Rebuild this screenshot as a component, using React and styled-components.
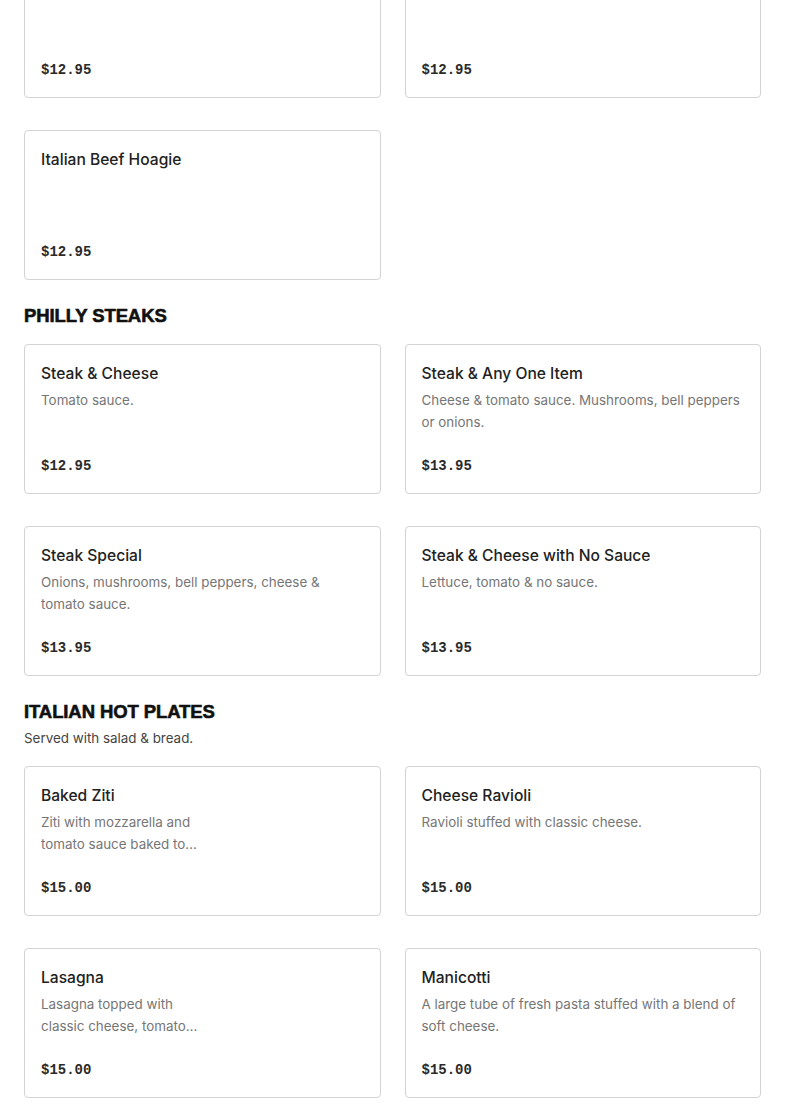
import React from 'react';
import styled, { createGlobalStyle } from 'styled-components';

const GlobalStyle = createGlobalStyle`
  * {
    box-sizing: border-box;
  }
  body {
    margin: 0;
    background: #ffffff;
    font-family: Inter, 'Liberation Sans', sans-serif;
    overflow: hidden;
  }
`;

const Page = styled.div`
  padding: 0 24px;
  margin-top: -52px;
`;

const Section = styled.section`
  padding-top: ${(p) => (p.first ? '0' : '24px')};
`;

const Heading = styled.h2`
  margin: 0;
  font-family: 'Liberation Sans', Arial, sans-serif;
  font-size: 18.5px;
  font-weight: 900;
  line-height: 24px;
  color: #111111;
  letter-spacing: -0.1px;
  -webkit-text-stroke: 0.6px #111111;
`;

const Subtitle = styled.p`
  margin: 3px 0 0;
  padding-bottom: 1px;
  font-size: 13.4px;
  line-height: 22px;
  color: #444444;
`;

const Grid = styled.div`
  display: grid;
  grid-template-columns: 1fr 1fr;
  column-gap: 24px;
  row-gap: 32px;
  margin-top: ${(p) => (p.flush ? '0' : '16px')};
`;

const Card = styled.div`
  display: flex;
  flex-direction: column;
  height: 150px;
  padding: 17px 16px 15px;
  border: 1px solid #d3d3d3;
  border-radius: 4px;
  background: #ffffff;
`;

const Title = styled.div`
  font-size: 15.6px;
  font-weight: 500;
  line-height: 24px;
  color: #222222;
`;

const Desc = styled.div`
  margin-top: 3px;
  font-size: 13.4px;
  line-height: 22px;
  color: #767676;
  max-width: ${(p) => (p.narrow ? '170px' : 'none')};
  display: -webkit-box;
  -webkit-line-clamp: 2;
  -webkit-box-orient: vertical;
  overflow: hidden;
`;

const Price = styled.div`
  margin-top: auto;
  font-family: 'Liberation Mono', 'DejaVu Sans Mono', monospace;
  font-size: 14px;
  font-weight: 700;
  line-height: 24px;
  color: #2a2a2a;
`;

const sections = [
  {
    items: [
      { title: 'Meatball Hoagie', price: '$12.95' },
      { title: 'Sausage Hoagie', price: '$12.95' },
      { title: 'Italian Beef Hoagie', price: '$12.95' },
    ],
  },
  {
    name: 'PHILLY STEAKS',
    items: [
      { title: 'Steak & Cheese', desc: 'Tomato sauce.', price: '$12.95' },
      {
        title: 'Steak & Any One Item',
        desc: 'Cheese & tomato sauce. Mushrooms, bell peppers or onions.',
        price: '$13.95',
      },
      {
        title: 'Steak Special',
        desc: 'Onions, mushrooms, bell peppers, cheese & tomato sauce.',
        price: '$13.95',
      },
      {
        title: 'Steak & Cheese with No Sauce',
        desc: 'Lettuce, tomato & no sauce.',
        price: '$13.95',
      },
    ],
  },
  {
    name: 'ITALIAN HOT PLATES',
    note: 'Served with salad & bread.',
    items: [
      {
        title: 'Baked Ziti',
        desc: 'Ziti with mozzarella and tomato sauce baked to perfection.',
        narrow: true,
        price: '$15.00',
      },
      { title: 'Cheese Ravioli', desc: 'Ravioli stuffed with classic cheese.', price: '$15.00' },
      {
        title: 'Lasagna',
        desc: 'Lasagna topped with classic cheese, tomato sauce and mozzarella.',
        narrow: true,
        price: '$15.00',
      },
      {
        title: 'Manicotti',
        desc: 'A large tube of fresh pasta stuffed with a blend of soft cheese.',
        price: '$15.00',
      },
    ],
  },
];

const MenuCard = ({ item }) => (
  <Card>
    <Title>{item.title}</Title>
    {item.desc && <Desc narrow={item.narrow}>{item.desc}</Desc>}
    <Price>{item.price}</Price>
  </Card>
);

const App = () => (
  <>
    <GlobalStyle />
    <Page>
      {sections.map((s, i) => (
        <Section key={i} first={i === 0}>
          {s.name && <Heading>{s.name}</Heading>}
          {s.note && <Subtitle>{s.note}</Subtitle>}
          <Grid flush={!s.name}>
            {s.items.map((item) => (
              <MenuCard key={item.title} item={item} />
            ))}
          </Grid>
        </Section>
      ))}
    </Page>
  </>
);

export default App;
